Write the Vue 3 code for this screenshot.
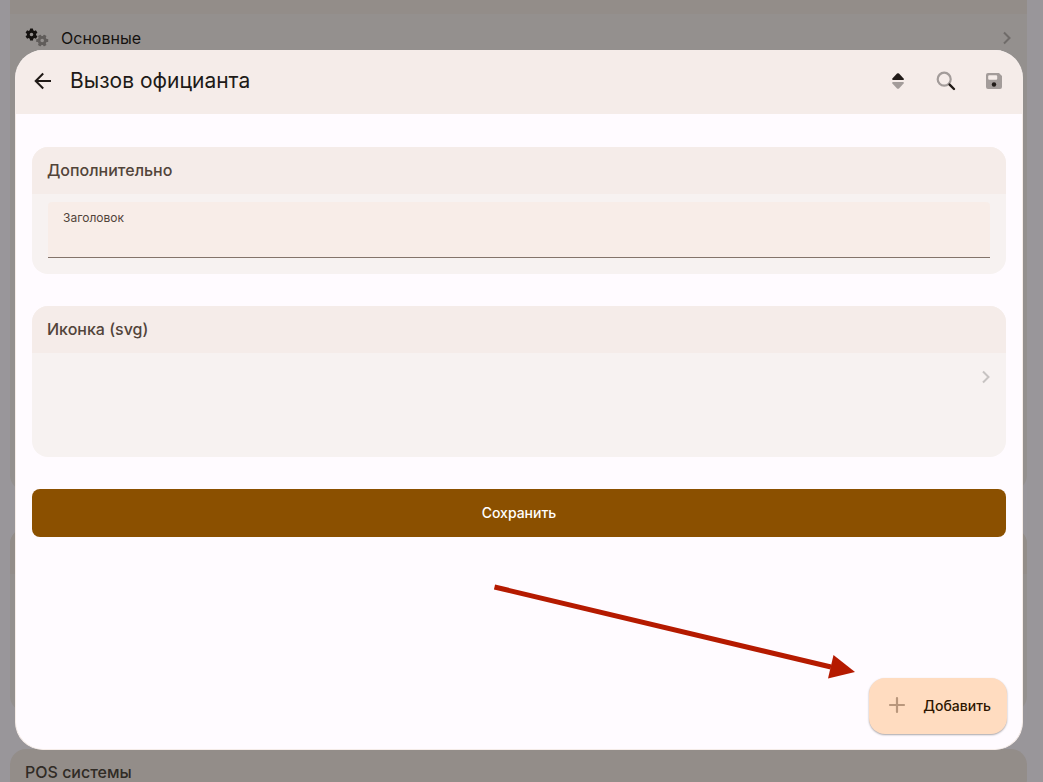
<script setup>
import { ref } from 'vue'

const heading = ref('')
const gearTeeth = [0, 60, 120, 180, 240, 300]
</script>

<template>
  <div class="screen">
    <main class="backdrop-page">
      <section class="panel panel-first">
        <div class="panel-strip"></div>
        <a class="panel-row" href="#main">
          <svg class="gears" viewBox="0 0 24 24" aria-hidden="true">
            <g class="gear-dark" transform="translate(6.5 8.5)">
              <circle r="3.2" fill="none" stroke-width="2.8" />
              <rect v-for="a in gearTeeth" :key="a" x="-1.6" y="-6" width="3.2" height="3" rx="0.6" :transform="`rotate(${a})`" stroke="none" />
            </g>
            <g class="gear-light" transform="translate(17.2 14.5)">
              <circle r="3.2" fill="none" stroke-width="2.8" />
              <rect v-for="a in gearTeeth" :key="a" x="-1.6" y="-6" width="3.2" height="3" rx="0.6" :transform="`rotate(${a + 30})`" stroke="none" />
            </g>
          </svg>
          <span>Основные</span>
          <svg class="row-chevron" viewBox="0 0 10 14" aria-hidden="true"><path d="M2 1.5 7.5 7 2 12.5" /></svg>
        </a>
      </section>
      <section class="panel panel-second"><div class="panel-head"></div></section>
      <section class="panel panel-third"><h2 class="panel-head">POS системы</h2></section>
    </main>

    <div class="dialog" role="dialog" aria-labelledby="dialog-title">
      <header class="bar">
        <button class="icon-btn" type="button" aria-label="Назад">
          <svg class="icon" viewBox="0 0 24 24"><path d="M20 12H5M12.200 4.500 4.700 12l7.500 7.500" fill="none" stroke="#201a17" stroke-width="2" /></svg>
        </button>
        <h1 id="dialog-title">Вызов официанта</h1>
        <div class="actions">
          <button class="icon-btn" type="button" aria-label="Сортировка">
            <svg class="icon" viewBox="0 0 24 24">
              <path d="M7 11h10q1.600-.1.600-1.600L13 4.600q-1-.9-2 0L6.400 9.400Q5.600 10.800 7 11z" fill="#201a17" />
              <path d="M7 13h10q1.600.1.600 1.600L13 19.400q-1 .9-2 0l-4.600-4.800Q5.600 13.200 7 13z" fill="#a39c9a" />
            </svg>
          </button>
          <button class="icon-btn" type="button" aria-label="Поиск">
            <svg class="icon" viewBox="0 0 24 24">
              <circle cx="10.200" cy="10.200" r="6.500" fill="none" stroke="#a39c9a" stroke-width="2.200" />
              <path d="m15.600 15.600 4.400 4.400" stroke="#201a17" stroke-width="2.400" stroke-linecap="round" />
            </svg>
          </button>
          <button class="icon-btn" type="button" aria-label="Сохранить изменения">
            <svg class="icon" viewBox="0 0 24 24">
              <path fill-rule="evenodd" d="M6 4h11l3 3v11q0 2-2 2H6q-2 0-2-2V6q0-2 2-2zm1.300 2.200q-1.100 0-1.100 1.100v2.400q0 1.100 1.100 1.100h6.800q1.100 0 1.100-1.100V7.300q0-1.100-1.100-1.100z" fill="#a39c9a" />
              <circle cx="12" cy="15.500" r="2.200" fill="#201a17" />
            </svg>
          </button>
        </div>
      </header>

      <form class="content" @submit.prevent>
        <section class="card">
          <h2 class="card-head">Дополнительно</h2>
          <div class="field">
            <label for="heading">Заголовок</label>
            <input id="heading" v-model="heading" type="text" />
          </div>
        </section>

        <section class="card">
          <h2 class="card-head">Иконка (svg)</h2>
          <button class="picker" type="button" aria-label="Выбрать иконку">
            <svg class="row-chevron" viewBox="0 0 10 14"><path d="M2 1.500 7.500 7 2 12.500" /></svg>
          </button>
        </section>

        <button class="save" type="submit">Сохранить</button>
      </form>

      <svg class="pointer" viewBox="0 0 362 96" aria-hidden="true">
        <path d="M1.500 4 338 84" />
        <path class="tip" d="M340.500 72 362 89l-27 6.500z" />
      </svg>

      <button class="add" type="button">
        <svg class="icon" viewBox="0 0 24 24" aria-hidden="true"><path d="M12 5v14M5 12h14" stroke="#b9977c" stroke-width="2.200" stroke-linecap="round" /></svg>
        <span>Добавить</span>
      </button>
    </div>
  </div>
</template>

<style>
body {
  margin: 0;
}
</style>

<style scoped>
* {
  box-sizing: border-box;
}

.screen {
  position: relative;
  height: 100vh;
  overflow: hidden;
  background: #99969a;
  font-family: Inter, "Liberation Sans", sans-serif;
  color: #201a17;
}

h1,
h2 {
  margin: 0;
  font-weight: 400;
}

button {
  border: 0;
  padding: 0;
  background: none;
  font: inherit;
  color: inherit;
  cursor: pointer;
}

.backdrop-page {
  display: flex;
  flex-direction: column;
  gap: 37px;
  padding: 0 16px 0 10px;
}

.panel {
  flex: none;
  overflow: hidden;
  border-radius: 16px;
  background: #94908e;
}

.panel-first {
  height: 491px;
  border-radius: 0 0 16px 16px;
}

.panel-second {
  height: 184px;
}

.panel-strip {
  height: 14px;
  background: #938d89;
}

.panel-row {
  display: flex;
  align-items: center;
  gap: 12px;
  height: 48px;
  padding: 0 15px;
  color: #151210;
  font-size: 16px;
  text-decoration: none;
}

.gears {
  width: 24px;
  height: 24px;
}

.gear-dark {
  fill: #151210;
  stroke: #151210;
}

.gear-light {
  fill: #615d5b;
  stroke: #615d5b;
}

.row-chevron {
  width: 10px;
  height: 14px;
  margin-left: auto;
  fill: none;
  stroke: #6f6b69;
  stroke-width: 2;
}

.panel-head {
  height: 46px;
  padding: 0 15px;
  background: #938d89;
  color: #302b25;
  font-size: 16px;
  font-weight: 500;
  line-height: 46px;
}

.dialog {
  position: absolute;
  inset: 50px 20px 32px 15px;
  display: flex;
  flex-direction: column;
  overflow: hidden;
  border: 1px solid #f5ece8;
  border-top: 0;
  border-radius: 28px;
  background: #fffbff;
}

.bar {
  display: flex;
  flex: none;
  align-items: center;
  gap: 15px;
  height: 64px;
  padding: 0 16px 2px 15px;
  background: #f5ece9;
}

.bar h1 {
  font-size: 21px;
  line-height: 28px;
}

.icon-btn {
  display: flex;
  flex: none;
}

.icon {
  display: block;
  width: 24px;
  height: 24px;
}

.actions {
  display: flex;
  gap: 24px;
  margin-left: auto;
}

.content {
  display: flex;
  flex-direction: column;
  gap: 32px;
  padding: 33px 16px 0;
}

.card {
  overflow: hidden;
  border-radius: 16px;
  background: #f7f2f1;
}

.card-head {
  padding: 0 15px;
  background: #f5ece9;
  color: #52443a;
  font-size: 16px;
  font-weight: 500;
  line-height: 47px;
}

.field {
  display: flex;
  flex-direction: column;
  height: 56px;
  margin: 8px 16px 16px;
  padding: 8px 15px 0;
  border-bottom: 1px solid #84746a;
  border-radius: 4px 4px 0 0;
  background: #f8ede8;
}

.field label {
  color: #52443a;
  font-size: 12px;
  line-height: 16px;
}

.field input {
  flex: 1;
  width: 100%;
  min-height: 0;
  padding: 0;
  border: 0;
  outline: 0;
  background: transparent;
  font: inherit;
  font-size: 16px;
}

.picker {
  display: flex;
  width: 100%;
  height: 104px;
  padding: 17px 15px;
}

.picker .row-chevron {
  stroke: #c7c3c2;
}

.save {
  height: 48px;
  padding-bottom: 2px;
  border-radius: 8px;
  background: #8b5000;
  color: #fff;
  font-size: 14px;
  font-weight: 500;
}

.pointer {
  position: absolute;
  right: 167px;
  bottom: 70px;
  width: 362px;
  height: 96px;
  fill: none;
  stroke: #b51a00;
  stroke-width: 5;
}

.pointer .tip {
  fill: #b51a00;
  stroke: none;
}

.add {
  position: absolute;
  right: 15px;
  bottom: 15px;
  display: flex;
  align-items: center;
  gap: 14px;
  height: 56px;
  padding: 0 16px 2px;
  border-radius: 16px;
  background: #ffdcc0;
  box-shadow: 0 1px 2px rgba(0, 0, 0, 0.35);
  color: #2d1600;
  font-size: 14px;
  font-weight: 500;
}
</style>
